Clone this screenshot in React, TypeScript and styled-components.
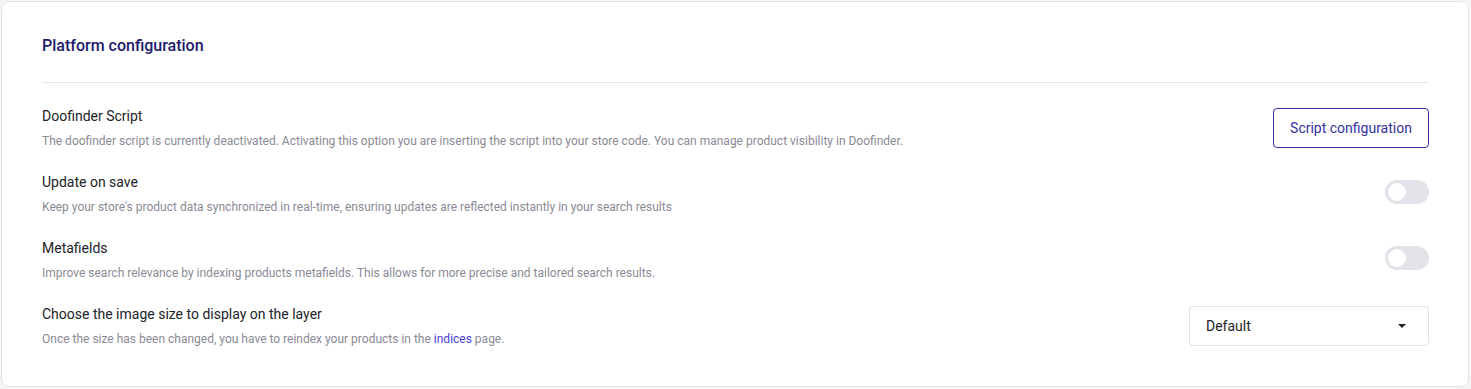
import React from 'react'
import styled, { createGlobalStyle } from 'styled-components'

const GlobalStyle = createGlobalStyle`
  html, body {
    margin: 0;
    padding: 0;
    background: #f5f5f8;
  }
  body {
    padding: 1px 2px 2px 1px;
    font-family: Roboto, 'Liberation Sans', sans-serif;
  }
`

const Card = styled.section`
  background: #ffffff;
  border: 1px solid #e3e3ea;
  border-radius: 8px;
  padding: 26px 39px 30px 40px;
  box-sizing: border-box;
  height: 386px;
`

const Title = styled.h2`
  margin: 0;
  padding: 9px 0 27px;
  font-family: Roboto, 'Liberation Sans', sans-serif;
  font-weight: 500;
  font-size: 16px;
  line-height: 18px;
  color: #1d1a6b;
  border-bottom: 1px solid #e6e6ec;
`

const List = styled.div`
  display: flex;
  flex-direction: column;
  padding-top: 21px;
  gap: 19px;
`

const Row = styled.div`
  display: flex;
  align-items: center;
  justify-content: space-between;
  min-height: 47px;
`

const Text = styled.div`
  display: flex;
  flex-direction: column;
  gap: 8px;
`

const Label = styled.div`
  font-size: 14px;
  line-height: 18px;
  color: #222228;
`

const Desc = styled.div`
  font-size: 12px;
  line-height: 16px;
  color: #8a8a95;
`

const Link = styled.a`
  color: #4b40d8;
  text-decoration: none;
`

const OutlineButton = styled.button`
  height: 40px;
  width: 156px;
  background: #fff;
  border: 1px solid #35309e;
  border-radius: 4px;
  color: #35309e;
  font-family: Roboto, 'Liberation Sans', sans-serif;
  font-size: 14px;
  cursor: pointer;
`

const Switch = styled.span<{ $on?: boolean }>`
  position: relative;
  display: inline-block;
  width: 44px;
  height: 24px;
  margin-bottom: 4px;
  border-radius: 12px;
  background: ${p => (p.$on ? '#35309e' : '#e2e2e9')};
  &::after {
    content: '';
    position: absolute;
    top: 3px;
    left: ${p => (p.$on ? '23px' : '3px')};
    width: 18px;
    height: 18px;
    border-radius: 50%;
    background: #fff;
  }
`

const Select = styled.div`
  display: flex;
  align-items: center;
  justify-content: space-between;
  box-sizing: border-box;
  width: 240px;
  height: 40px;
  padding: 0 22px 0 16px;
  border: 1px solid #e2e2e9;
  border-radius: 4px;
  font-size: 14px;
  color: #222228;
`

const Caret = styled.span`
  width: 0;
  height: 0;
  border-left: 4px solid transparent;
  border-right: 4px solid transparent;
  border-top: 4px solid #222;
`

export default function App() {
  return (
    <>
      <GlobalStyle />
      <Card>
        <Title>Platform configuration</Title>
        <List>
          <Row>
            <Text>
              <Label>Doofinder Script</Label>
              <Desc>
                The doofinder script is currently deactivated. Activating this option you are inserting the script into your store code. You can manage product visibility in Doofinder.
              </Desc>
            </Text>
            <OutlineButton>Script configuration</OutlineButton>
          </Row>
          <Row>
            <Text>
              <Label>Update on save</Label>
              <Desc>
                Keep your store's product data synchronized in real-time, ensuring updates are reflected instantly in your search results
              </Desc>
            </Text>
            <Switch />
          </Row>
          <Row>
            <Text>
              <Label>Metafields</Label>
              <Desc>
                Improve search relevance by indexing products metafields. This allows for more precise and tailored search results.
              </Desc>
            </Text>
            <Switch />
          </Row>
          <Row>
            <Text>
              <Label>Choose the image size to display on the layer</Label>
              <Desc>
                Once the size has been changed, you have to reindex your products in the <Link href="#">indices</Link> page.
              </Desc>
            </Text>
            <Select>
              Default
              <Caret />
            </Select>
          </Row>
        </List>
      </Card>
    </>
  )
}
